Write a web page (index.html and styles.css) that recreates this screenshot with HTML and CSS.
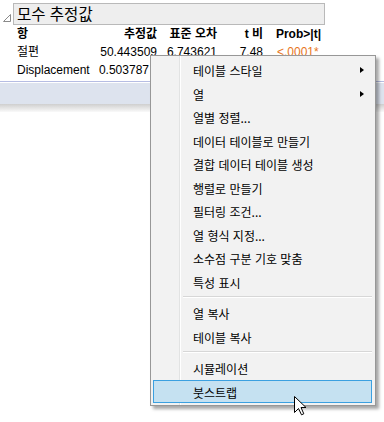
FILE: index.html
```html
<!DOCTYPE html>
<html lang="ko">
<head>
    <meta charset="UTF-8">
    <title>모수 추정값</title>
    <link rel="stylesheet" href="styles.css">
</head>
<body>
    <div class="report">
        <!-- Outline header -->
        <div class="outline-head">
            <svg class="disclosure" width="10" height="10" viewBox="0 0 10 10">
                <polygon points="8.5,1.5 8.5,8.5 1.5,8.5" fill="#fff" stroke="#8a8a8a" stroke-width="1"/>
            </svg>
            <div class="outline-title">모수 추정값</div>
        </div>

        <!-- Parameter estimates table -->
        <div class="estimates">
            <div class="cell head left">항</div>
            <div class="cell head">추정값</div>
            <div class="cell head">표준 오차</div>
            <div class="cell head">t 비</div>
            <div class="cell head">Prob&gt;|t|</div>

            <div class="cell left">절편</div>
            <div class="cell">50.443509</div>
            <div class="cell">6.743621</div>
            <div class="cell">7.48</div>
            <div class="cell prob">&lt;.0001*</div>

            <div class="cell left">Displacement</div>
            <div class="cell short">0.503787</div>
        </div>

        <div class="strip"></div>
    </div>

    <!-- Context menu -->
    <div class="menu">
        <div class="menu-item has-sub">테이블 스타일</div>
        <div class="menu-item has-sub">열</div>
        <div class="menu-item">열별 정렬...</div>
        <div class="menu-item">데이터 테이블로 만들기</div>
        <div class="menu-item">결합 데이터 테이블 생성</div>
        <div class="menu-item">행렬로 만들기</div>
        <div class="menu-item">필터링 조건...</div>
        <div class="menu-item">열 형식 지정...</div>
        <div class="menu-item">소수점 구분 기호 맞춤</div>
        <div class="menu-item">특성 표시</div>
        <div class="menu-sep"></div>
        <div class="menu-item">열 복사</div>
        <div class="menu-item">테이블 복사</div>
        <div class="menu-sep"></div>
        <div class="menu-item">시뮬레이션</div>
        <div class="menu-item selected">붓스트랩</div>
    </div>

    <!-- Mouse pointer -->
    <svg class="pointer" width="13" height="20" viewBox="0 0 13 20">
        <polygon points="0.5,0.5 0.5,16.5 4.5,12.5 7.5,18.8 9.8,17.8 7,11.5 12,11.5" fill="#fff" stroke="#000" stroke-width="1" stroke-linejoin="round"/>
    </svg>
</body>
</html>
```

FILE: styles.css
```css
/* Basic styling */
* { box-sizing: border-box; margin: 0; padding: 0; }
body { background-color: #ffffff; font-family: "Noto Sans CJK KR", "Noto Sans", sans-serif; font-size: 12px; color: #000; width: 384px; height: 422px; overflow: hidden; position: relative; }

/* Outline header */
.report { padding-top: 3px; }
.outline-head { display: flex; align-items: flex-end; padding-left: 2px; }
.disclosure { margin-right: 1px; margin-bottom: 2px; }
.outline-title { width: 312px; height: 22px; background-color: #eeeeee; border: 1px solid #b9b9b9; padding-left: 3px; font-size: 15.5px; line-height: 19px; }

/* Table */
.estimates { display: grid; grid-template-columns: 80px 60px 60px 46px 58px; grid-auto-rows: 18px; margin-left: 17px; line-height: 18px; font-family: "Liberation Sans", "Noto Sans CJK KR", sans-serif; }
.cell { text-align: right; white-space: nowrap; }
.cell.left { text-align: left; }
.cell.short { padding-right: 8px; }
.cell.head { font-weight: bold; }
.cell.prob { color: #e8761c; text-align: left; padding-left: 14px; }
.strip { margin-top: 2px; height: 31px; border-top: 1px solid #b6bde3; background: linear-gradient(#ffffff 0, #ffffff 1px, #dde3ee 1px, #dde3ee 22px, #cfcfcf 22px, #ffffff 31px); }

/* Context menu */
.menu { position: absolute; left: 150px; top: 55px; width: 226px; padding: 2px; background: linear-gradient(to right, #f2f2f2 28px, #e2e3e3 28px, #e2e3e3 29px, #ffffff 29px, #ffffff 30px, #f2f2f2 30px); border: 1px solid #979797; box-shadow: 3px 3px 3px rgba(0, 0, 0, 0.35); }
.menu-item { height: 23.5px; line-height: 23px; padding-left: 39px; border: 1px solid transparent; position: relative; }
.menu-item.has-sub::after { content: ""; position: absolute; right: 8px; top: 8px; border-left: 4px solid #000; border-top: 3.5px solid transparent; border-bottom: 3.5px solid transparent; }
.menu-item.selected { background-color: #c5e1f1; border-color: #3ba0e0; margin-right: 1px; }
.menu-sep { height: 8px; margin-left: 30px; margin-right: 1px; background: linear-gradient(transparent 3px, #d7d7d7 3px, #d7d7d7 4px, #ffffff 4px, #ffffff 5px, transparent 5px); }

/* Pointer */
.pointer { position: absolute; left: 294px; top: 396px; }
```
